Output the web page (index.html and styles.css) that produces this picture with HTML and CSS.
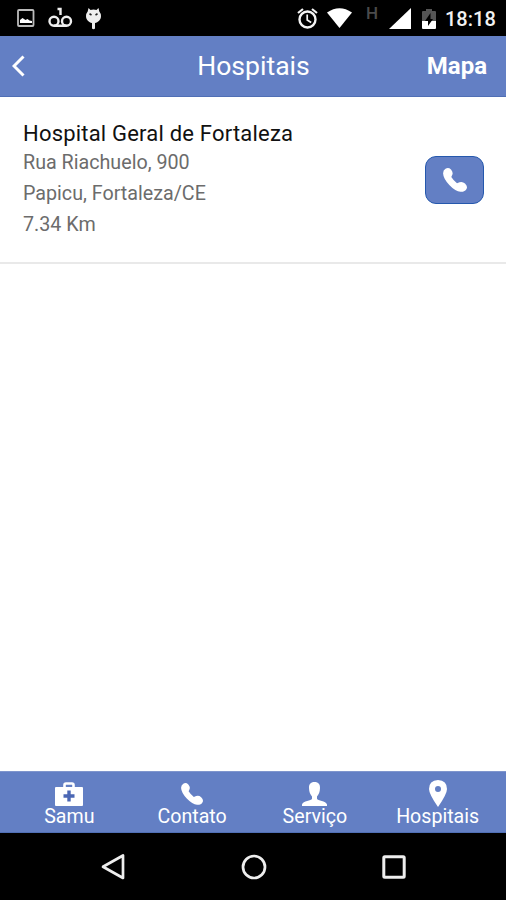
FILE: index.html
```html
<!DOCTYPE html>
<html lang="pt-BR">
<head>
<meta charset="utf-8">
<title>Hospitais</title>
<link rel="stylesheet" href="styles.css">
</head>
<body>
<div class="screen">
  <div class="status">
    <div class="notices">
      <svg width="18" height="19" viewBox="0 0 18 19"><rect x="1" y="1" width="15.500" height="16" rx="1" fill="none" stroke="#bbb" stroke-width="1.800"/><path d="M3 14v-3l2.500-2 3 2 2-1 2 1.500 2.500.5v2z" fill="#fff"/></svg>
      <svg class="voicemail" width="25" height="21" viewBox="0 0 25 21"><g fill="none" stroke="#eee" stroke-width="2.400"><circle cx="6" cy="14.200" r="4.500"/><circle cx="18.500" cy="14.200" r="4.500"/><path d="M6 18.800h12.500M9.500 2h3v6"/></g></svg>
      <svg class="droid" width="17" height="22" viewBox="0 0 17 22"><path d="M3.500 0l2 2q3-.8 6 0l2-2 .8 3.500Q16 5.500 16 8c0 4-3 6.500-6 7v5.500q-1.500 1.500-3 0V15c-3-.5-6-3-6-7q0-2.500 1.700-4.500z" fill="#eee"/><path d="M4.500 5.800l2 1.200M12.500 5.800l-2 1.200" stroke="#222" stroke-width="1.600"/></svg>
    </div>
    <div class="system">
      <svg width="21" height="21" viewBox="0 0 21 21"><g fill="none" stroke="#f4f4f4"><circle cx="10.500" cy="11.500" r="8" stroke-width="2.400"/><path d="M10.200 6.500v5.500l4 2.500" stroke-width="1.700"/><path d="M1 5l5-4M20 5l-5-4" stroke-width="2.200"/></g></svg>
      <svg class="wifi" width="25" height="20" viewBox="0 0 25 20"><path d="M0 4.500Q12.500-4 25 4.500L12.500 20z" fill="#fff"/></svg>
      <span class="network">H</span>
      <svg class="signal" width="22" height="21" viewBox="0 0 22 21"><path d="M22 0v21H0z" fill="#fff"/></svg>
      <svg class="battery" width="14" height="20" viewBox="0 0 14 20"><path d="M0 3q0-1 1-1h3V0h6v2h3q1 0 1 1v9H0z" fill="#555"/><path d="M0 12h14v7q0 1-1 1H1q-1 0-1-1z" fill="#fff"/><path d="M8.500 4v6H11l-5 7v-5H3z" fill="#000"/></svg>
      <span class="clock">18:18</span>
    </div>
  </div>
  <header class="header">
    <svg class="back" width="13" height="22" viewBox="0 0 13 22"><path d="M11.500 1.500L2 11l9.500 9.500" fill="none" stroke="#fff" stroke-width="3"/></svg>
    <h1 class="title">Hospitais</h1>
    <span class="map">Mapa</span>
  </header>
  <main class="list">
    <article class="item">
      <div class="info">
        <h2 class="name">Hospital Geral de Fortaleza</h2>
        <p class="street">Rua Riachuelo, 900</p>
        <p class="city">Papicu, Fortaleza/CE</p>
        <p class="distance">7.34 Km</p>
      </div>
      <button class="call" aria-label="Ligar"><svg width="24" height="24" viewBox="0 0 24 24"><path d="M2.500.7Q5.500-.8 8 1.500 10.500 4.500 9.200 7L8.300 9Q10.500 12.500 14 15.200L16.500 14.300Q19.500 13.300 22 15.500 25 18.500 23.500 21 22 24 17.500 23.800 12.500 23.500 6.300 17 .3 10.500.1 5.500 0 2.200 2.500.7z" fill="#fff"/></svg></button>
    </article>
  </main>
  <nav class="tabs">
    <a class="tab"><span class="glyph"><svg width="28" height="24" viewBox="0 0 28 24"><path d="M9.500 6V3q0-1.500 1.500-1.500h6q1.500 0 1.500 1.500v3" fill="none" stroke="#fff" stroke-width="2.600"/><rect y="5" width="28" height="19" rx="1" fill="#fff"/><path d="M14 8.500v11M8.500 14h11" stroke="#4b67b4" stroke-width="3.400"/></svg></span><span class="samu">Samu</span></a>
    <a class="tab"><span class="glyph"><svg width="22" height="22" viewBox="0 0 24 24"><path d="M2.500.7Q5.500-.8 8 1.500 10.500 4.500 9.200 7L8.300 9Q10.500 12.500 14 15.200L16.500 14.300Q19.500 13.300 22 15.500 25 18.500 23.500 21 22 24 17.500 23.800 12.500 23.500 6.300 17 .3 10.500.1 5.500 0 2.200 2.500.7z" fill="#fff"/></svg></span><span class="contact">Contato</span></a>
    <a class="tab"><span class="glyph"><svg width="25" height="24" viewBox="0 0 25 24"><path d="M12.500 0C8.500 0 6.800 2.500 7 6c.1 4 1.200 6.300 3 8.500v2.300C9.500 19 1 18.500 0 22.500V24h25v-1.500C24 18.500 15.500 19 15 16.800v-2.300c1.800-2.200 2.900-4.500 3-8.500C18.200 2.500 16.500 0 12.500 0z" fill="#fff"/></svg></span><span class="service">Serviço</span></a>
    <a class="tab"><span class="glyph pin"><svg width="18" height="27" viewBox="0 0 18 27"><path fill-rule="evenodd" d="M9 0Q0 .5 0 9q0 5 9 18 9-13 9-18Q18 .5 9 0zm0 6a3 3 0 1 1 0 6 3 3 0 0 1 0-6z" fill="#fff"/></svg></span><span class="hospitals">Hospitais</span></a>
  </nav>
  <div class="softkeys">
    <svg width="25" height="28" viewBox="0 0 25 28"><path d="M23 2.500v22.500L3 13.800z" fill="none" stroke="#eee" stroke-width="2.700" stroke-linejoin="round"/></svg>
    <svg width="26" height="26" viewBox="0 0 26 26"><circle cx="13" cy="13" r="11" fill="none" stroke="#eee" stroke-width="2.700"/></svg>
    <svg width="24" height="24" viewBox="0 0 24 24"><rect x="1.800" y="1.800" width="20.400" height="20.400" rx="1" fill="none" stroke="#eee" stroke-width="3"/></svg>
  </div>
</div>
</body>
</html>
```
FILE: styles.css
```css
* { box-sizing: border-box; }
body { margin: 0; font-family: Roboto, sans-serif; background: #fff; }
svg { display: block; flex: none; }
h1, h2, p { margin: 0; font-weight: 400; white-space: nowrap; }
.screen { width: 506px; height: 900px; display: flex; flex-direction: column; overflow: hidden; }
.status { height: 36px; flex: none; background: #000; display: flex; justify-content: space-between; padding: 0 11px 0 17px; }
.notices, .system { display: flex; align-items: flex-start; padding-top: 9px; }
.system { padding-top: 8px; }
.voicemail { margin: -2px 0 0 13px; }
.droid { margin: -1px 0 0 12px; }
.wifi { margin-left: 9px; }
.network { width: 13px; margin: -5px 0 0 14px; font-size: 17px; line-height: 20px; font-weight: 500; color: #4b4b4b; }
.signal { margin-left: 10px; }
.battery { margin: 1px 0 0 11px; }
.clock { width: 50px; margin-left: 9px; font-size: 20px; line-height: 23px; font-weight: 500; color: #f2f2f2; white-space: nowrap; }
.header { height: 61px; flex: none; display: grid; grid-template-columns: 1fr auto 1fr; align-items: center; padding: 0 19px 0 12px; background: #637fc4; border-bottom: 1px solid #506fb5; color: #fff; }
.title { font-size: 26.600px; line-height: 32px; margin-left: 8px; }
.map { justify-self: end; font-size: 24px; line-height: 32px; font-weight: 700; }
.list { flex: 1; }
.item { height: 167px; display: flex; justify-content: space-between; padding: 22px 22px 0 23px; border-bottom: 2px solid #e9e9e9; }
.name { font-size: 22px; line-height: 30px; color: #111; letter-spacing: .2px; }
.street, .city, .distance { font-size: 19.700px; line-height: 31px; color: #6c6c6c; }
.street { margin-top: -2px; }
.call { width: 59px; height: 48px; margin-top: 37px; padding: 0 0 1px; display: flex; align-items: center; justify-content: center; background: #637fc4; border: 1.500px solid #2558ad; border-radius: 11px; }
.tabs { height: 62px; flex: none; display: grid; grid-template-columns: repeat(4, 1fr); padding: 0 7px 0 8px; background: #637fc4; border-top: 1px solid #7f95cd; border-bottom: 1px solid #506fb5; color: #fff; }
.tab { display: flex; flex-direction: column; align-items: center; font-size: 19.600px; line-height: 24px; white-space: nowrap; }
.glyph { height: 33px; display: flex; align-items: center; padding-top: 10px; }
.pin { padding-top: 9px; }
.softkeys { height: 67px; flex: none; display: flex; align-items: center; justify-content: space-between; padding: 0 100px; background: #000; }
```
